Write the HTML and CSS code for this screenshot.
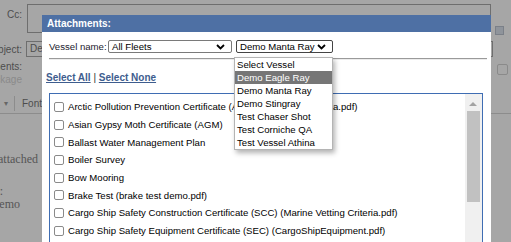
FILE: index.html
```html
<!DOCTYPE html>
<html lang="en">
<head>
   <meta charset="UTF-8">
   <title>Compose - Attachments</title>
   <link rel="stylesheet" href="styles.css">
</head>
<body>

   <div class="page">
      <div class="row cc-row">
         <div class="lbl">Cc:</div>
         <div class="cc-box"></div>
      </div>
      <div class="row subj-row">
         <div class="lbl">Subject:</div>
         <div class="subj-box">Demo</div>
         <span class="book"></span>
      </div>
      <div class="row att-row">
         <div class="lbl att-lbl">
            <span>Attachments:</span>
            <span class="muted">No Package</span>
         </div>
         <span class="att-check"></span>
      </div>
      <div class="toolbar">
         <span class="tb-arrow">&#9662;</span>
         <span class="tb-btn">Font</span>
      </div>
      <div class="editor">
         <p class="line-1">Please find attached</p>
         <p class="line-2">Vessel:</p>
         <p class="line-3">Demo</p>
      </div>
   </div>

   <div class="modal">
      <div class="modal-head">Attachments:</div>
      <div class="modal-body">
         <div class="vessel-row">
            <span class="vessel-lbl">Vessel name:</span>
            <div class="sel sel-fleet">
               <span>All Fleets</span>
               <svg width="9" height="6" viewBox="0 0 9 6"><path d="M1 1 L4.5 4.5 L8 1" fill="none" stroke="#000" stroke-width="1.8"/></svg>
            </div>
            <div class="sel sel-vessel">
               <span>Demo Manta Ray</span>
               <svg width="9" height="6" viewBox="0 0 9 6"><path d="M1 1 L4.5 4.5 L8 1" fill="none" stroke="#000" stroke-width="1.8"/></svg>
            </div>
         </div>
         <div class="rule"></div>
         <div class="links">
            <a href="#">Select All</a> | <a href="#">Select None</a>
         </div>
         <div class="list">
            <div class="items">
               <label class="item"><input type="checkbox"> Arctic Pollution Prevention Certificate (APPC) (Arctic Seas Data.pdf)</label>
               <label class="item"><input type="checkbox"> Asian Gypsy Moth Certificate (AGM)</label>
               <label class="item"><input type="checkbox"> Ballast Water Management Plan</label>
               <label class="item"><input type="checkbox"> Boiler Survey</label>
               <label class="item"><input type="checkbox"> Bow Mooring</label>
               <label class="item"><input type="checkbox"> Brake Test (brake test demo.pdf)</label>
               <label class="item"><input type="checkbox"> Cargo Ship Safety Construction Certificate (SCC) (Marine Vetting Criteria.pdf)</label>
               <label class="item"><input type="checkbox"> Cargo Ship Safety Equipment Certificate (SEC) (CargoShipEquipment.pdf)</label>
               <label class="item"><input type="checkbox"> Cargo Ship Safety Radio Certificate (SRC)</label>
            </div>
            <div class="scrollbar">
               <span class="sb-up"></span>
               <span class="sb-thumb"></span>
            </div>
         </div>
      </div>

      <div class="dropdown">
         <div class="opt">Select Vessel</div>
         <div class="opt active">Demo Eagle Ray</div>
         <div class="opt">Demo Manta Ray</div>
         <div class="opt">Demo Stingray</div>
         <div class="opt">Test Chaser Shot</div>
         <div class="opt">Test Corniche QA</div>
         <div class="opt">Test Vessel Athina</div>
      </div>
   </div>

</body>
</html>
```

FILE: styles.css
```css
body {
   margin: 0;
   padding: 0;
   width: 511px;
   height: 242px;
   overflow: hidden;
   position: relative;
   background-color: #a6a6a6;
   font-family: 'Liberation Sans', Arial, sans-serif;
   font-size: 9.6px;
   color: #000;
}

/* background compose form (dimmed) */
.page {
   color: #4d4d4d;
}
.row {
   display: flex;
   align-items: flex-start;
}
.lbl {
   width: 22px;
   display: flex;
   justify-content: flex-end;
   white-space: nowrap;
   font-size: 10px;
}
.cc-row {
   padding-top: 4px;
   height: 29px;
}
.cc-row .lbl {
   padding-top: 5px;
}
.cc-box {
   margin-left: 5px;
   width: 462px;
   height: 27px;
   border: 1px solid #6e6e6e;
}
.subj-row {
   margin-top: 8px;
   height: 16px;
}
.subj-row .lbl {
   padding-top: 3px;
}
.subj-box {
   margin-left: 4px;
   width: 462px;
   height: 14px;
   border: 1px solid #6e6e6e;
   padding-left: 3px;
   line-height: 14px;
   font-size: 10px;
}
.book {
   width: 7px;
   height: 7px;
   margin: -15px 0 0 2px;
   background-color: #8f949b;
   border: 1px solid #7b8088;
}
.att-row {
   margin-top: 3px;
   height: 30px;
}
.att-lbl {
   flex-direction: column;
   align-items: flex-end;
   line-height: 13px;
}
.muted {
   color: #8a8a8a;
}
.att-check {
   margin: 4px 0 0 475px;
   width: 9px;
   height: 9px;
   border: 1px solid #8a8a8a;
   border-radius: 2px;
}
.toolbar {
   margin-top: 3px;
   height: 20px;
   border-bottom: 1px solid #8c8c8c;
   display: flex;
   align-items: center;
}
.tb-arrow {
   font-size: 8px;
   margin-left: 4px;
   color: #666;
}
.tb-btn {
   margin-left: 6px;
   padding: 2px 7px;
   border-left: 1px solid #8c8c8c;
   font-size: 10px;
}
.editor {
   font-family: 'Liberation Serif', 'Times New Roman', serif;
   font-size: 12px;
   color: #555;
   padding-top: 39px;
}
.editor p {
   margin: 0;
   line-height: 13px;
   display: flex;
   justify-content: flex-end;
   white-space: nowrap;
}
.line-1 {
   width: 38px;
}
.line-2 {
   width: 3px;
   margin-top: 19px !important;
}
.line-3 {
   width: 20px;
}

/* modal */
.modal {
   position: absolute;
   left: 42px;
   top: 15px;
   width: 449px;
   height: 240px;
   background-color: #fff;
}
.modal-head {
   height: 17px;
   line-height: 17px;
   background-color: #4e70a4;
   color: #fff;
   font-weight: bold;
   font-size: 10px;
   padding-left: 5px;
}
.modal-body {
   padding: 8px 0 0 7px;
}
.vessel-row {
   display: flex;
   align-items: center;
   height: 13px;
}
.vessel-lbl {
   width: 59px;
   color: #1a1a2e;
}
.sel {
   box-sizing: border-box;
   height: 13px;
   border: 1px solid #7a7a7a;
   border-radius: 2px;
   display: flex;
   align-items: center;
   justify-content: space-between;
   padding: 0 6px 0 3px;
   background-color: #fff;
   white-space: nowrap;
}
.sel-fleet {
   width: 124px;
}
.sel-vessel {
   width: 97px;
   margin-left: 4px;
   border-color: #444;
}
.rule {
   margin-top: 5px;
   width: 438px;
   border-top: 1px solid #9a9a9a;
   border-bottom: 1px solid #ececec;
}
.links {
   margin: 12px 0 0 -3px;
   height: 12px;
   line-height: 12px;
   font-size: 10px;
   color: #333;
}
.links a {
   color: #3e5d8e;
   font-weight: bold;
}
.list {
   margin-top: 9px;
   width: 434px;
   height: 160px;
   box-sizing: border-box;
   border: 1px solid #3f6db3;
   display: flex;
   overflow: hidden;
}
.items {
   flex: 1;
   padding: 4px 0 0 4px;
   overflow: hidden;
}
.item {
   display: flex;
   align-items: center;
   height: 17.7px;
   white-space: nowrap;
}
.item input {
   appearance: none;
   margin: 0 4px 0 0;
   width: 10px;
   height: 10px;
   border: 1px solid #8a8a8a;
   border-radius: 2px;
   background-color: #fff;
   flex-shrink: 0;
}
.scrollbar {
   width: 17px;
   background-color: #f0f0f0;
   position: relative;
}
.sb-up {
   position: absolute;
   left: 4px;
   top: 8px;
   border-left: 4px solid transparent;
   border-right: 4px solid transparent;
   border-bottom: 4px solid #a3a3a3;
}
.sb-thumb {
   position: absolute;
   left: 2px;
   top: 17px;
   width: 13px;
   height: 91px;
   background-color: #c1c1c1;
}

/* open select list */
.dropdown {
   position: absolute;
   left: 192px;
   top: 42px;
   width: 99px;
   box-sizing: border-box;
   border: 1px solid #b4b4b4;
   background-color: #fff;
   box-shadow: 2px 3px 5px rgba(0, 0, 0, 0.3);
}
.opt {
   height: 13px;
   line-height: 13px;
   padding-left: 2px;
   white-space: nowrap;
}
.opt.active {
   background-color: #767676;
   color: #fff;
}
```
